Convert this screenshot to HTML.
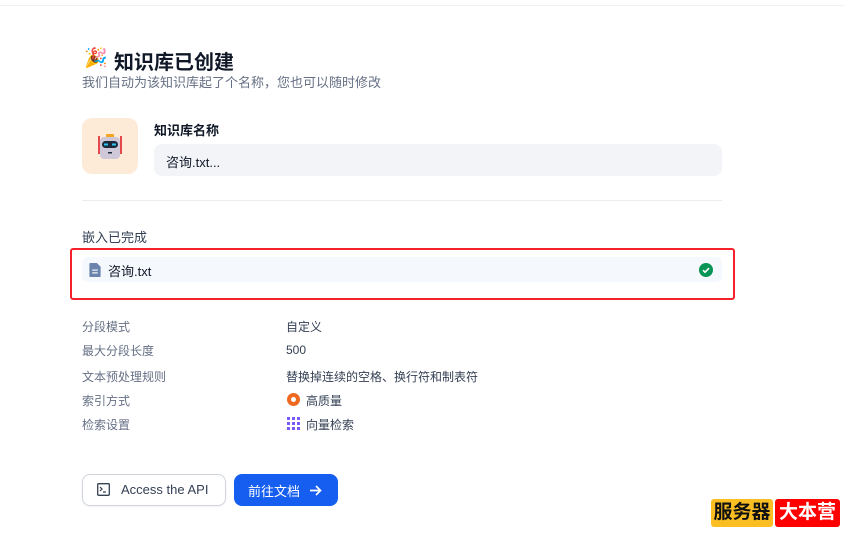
<!DOCTYPE html>
<html><head><meta charset="utf-8"><style>
*{margin:0;padding:0;box-sizing:border-box}
body{width:844px;height:538px;background:#fff;font-family:"Liberation Sans","Noto Sans CJK SC",sans-serif;position:relative;overflow:hidden;color:#101828}
.a{position:absolute}
.lbl{font-size:12px;color:#667085;left:82px}
.val{font-size:12px;color:#344054;left:286px}
</style></head><body>
<div class="a" style="left:0;top:5px;width:844px;height:1px;background:#f0f1f3"></div>
<div class="a" style="left:84px;top:46px;font-size:19px">🎉</div>
<div class="a" style="left:114px;top:46px;font-size:20px;font-weight:bold;color:#101828">知识库已创建</div>
<div class="a" style="left:82px;top:72px;font-size:13px;color:#667085">我们自动为该知识库起了个名称，您也可以随时修改</div>
<div class="a" style="left:82px;top:118px;width:56px;height:56px;background:#fdead7;border-radius:10px">
<svg width="56" height="56" viewBox="0 0 56 56"><rect x="16" y="18" width="2" height="18" fill="#e5484d"/><rect x="38" y="18" width="2" height="18" fill="#e5484d"/><rect x="24" y="16" width="8" height="4" rx="1" fill="#f5a524"/><rect x="18" y="19" width="20" height="22" rx="4" fill="#cfc8d8"/><rect x="20" y="23" width="16" height="7" rx="3.5" fill="#1d2939"/><rect x="22" y="25.5" width="4" height="2" fill="#2ec4f1"/><rect x="30" y="25.5" width="4" height="2" fill="#2ec4f1"/><rect x="26" y="34" width="4" height="1.5" fill="#1d2939"/></svg></div>
<div class="a" style="left:154px;top:120px;font-size:13px;font-weight:bold">知识库名称</div>
<div class="a" style="left:154px;top:144px;width:568px;height:32px;background:#f2f4f7;border-radius:8px;font-size:13px;padding:8px 12px;color:#101828">咨询.txt...</div>
<div class="a" style="left:82px;top:200px;width:640px;height:1px;background:#eaecf0"></div>
<div class="a" style="left:82px;top:227px;font-size:13px;color:#344054">嵌入已完成</div>
<div class="a" style="left:70px;top:248px;width:665px;height:52px;border:2px solid #f5222d;border-radius:3px"></div>
<div class="a" style="left:82px;top:257px;width:640px;height:25px;background:#f5f8fc;border-radius:6px"></div>
<svg class="a" style="left:89px;top:263px" width="12" height="14" viewBox="0 0 12 15"><path d="M1 0h7l4 4v10a1 1 0 0 1-1 1H1a1 1 0 0 1-1-1V1a1 1 0 0 1 1-1z" fill="#6b84ae"/><rect x="3" y="7" width="6" height="1.2" fill="#fff"/><rect x="3" y="10" width="6" height="1.2" fill="#fff"/></svg>
<div class="a" style="left:108px;top:261px;font-size:13px">咨询.txt</div>
<svg class="a" style="left:699px;top:263px" width="14" height="14" viewBox="0 0 14 14"><circle cx="7" cy="7" r="7" fill="#079455"/><path d="M4 7.2l2 2 4-4" stroke="#fff" stroke-width="1.6" fill="none"/></svg>
<div class="a lbl" style="top:318px">分段模式</div><div class="a val" style="top:318px">自定义</div>
<div class="a lbl" style="top:342px">最大分段长度</div><div class="a val" style="top:343px">500</div>
<div class="a lbl" style="top:368px">文本预处理规则</div><div class="a val" style="top:368px">替换掉连续的空格、换行符和制表符</div>
<div class="a lbl" style="top:392px">索引方式</div><div class="a val" style="top:392px;left:306px">高质量</div>
<svg class="a" style="left:287px;top:393px" width="13" height="13"><circle cx="6.5" cy="6.5" r="6.5" fill="#ef6820"/><circle cx="6.5" cy="6.5" r="2.5" fill="#fff"/></svg>
<div class="a lbl" style="top:416px">检索设置</div><div class="a val" style="top:416px;left:306px">向量检索</div>
<svg class="a" style="left:287px;top:417px" width="13" height="13" fill="#7a5af8"><rect x="0" y="0" width="3" height="3"/><rect x="5" y="0" width="3" height="3"/><rect x="10" y="0" width="3" height="3"/><rect x="0" y="5" width="3" height="3"/><rect x="5" y="5" width="3" height="3"/><rect x="10" y="5" width="3" height="3"/><rect x="0" y="10" width="3" height="3"/><rect x="5" y="10" width="3" height="3"/><rect x="10" y="10" width="3" height="3"/></svg>
<div class="a" style="left:82px;top:474px;width:144px;height:32px;border:1px solid #d0d5dd;border-radius:8px;box-shadow:0 1px 2px rgba(0,0,0,.05)"></div>
<svg class="a" style="left:97px;top:483px" width="13" height="13" viewBox="0 0 13 13"><rect x="0.7" y="0.7" width="11.6" height="11.6" rx="1" fill="none" stroke="#344054" stroke-width="1.3"/><path d="M3 4l2 2-2 2M6 9h3" stroke="#344054" stroke-width="1.2" fill="none"/></svg>
<div class="a" style="left:121px;top:482px;font-size:13px;color:#344054">Access the API</div>
<div class="a" style="left:234px;top:474px;width:104px;height:32px;background:#155eef;border-radius:8px;color:#fff;font-size:13px;padding:7px 0 0 14px">前往文档</div>
<svg class="a" style="left:308px;top:483px" width="15" height="15" viewBox="0 0 15 15"><path d="M2 7.5h10M8 3l4.5 4.5L8 12" stroke="#fff" stroke-width="1.7" fill="none"/></svg>
<div class="a" style="left:711px;top:499px;width:62px;height:28px;background:#fbbf24;border-radius:3px;font-size:19px;font-weight:bold;color:#111;text-align:center;line-height:28px">服务器</div>
<div class="a" style="left:775px;top:499px;width:65px;height:28px;background:#ff0000;border-radius:3px;font-size:19px;font-weight:bold;color:#fff;text-align:center;line-height:28px">大本营</div>
</body></html>
